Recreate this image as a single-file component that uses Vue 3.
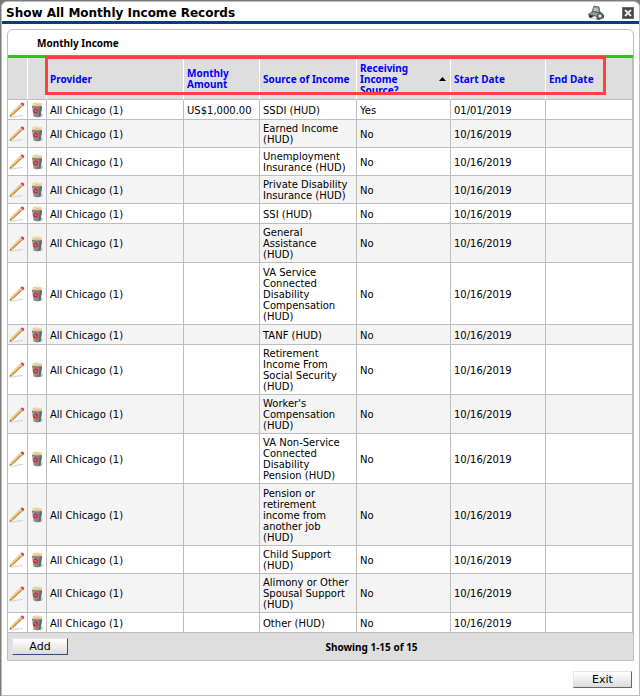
<script setup>
const columns = [
  { key: 'provider', label: 'Provider' },
  { key: 'amount', label: 'Monthly\nAmount' },
  { key: 'source', label: 'Source of Income' },
  { key: 'receiving', label: 'Receiving\nIncome\nSource?', sorted: true },
  { key: 'start', label: 'Start Date' },
  { key: 'end', label: 'End Date' },
]

const sources = [
  'SSDI (HUD)',
  'Earned Income\n(HUD)',
  'Unemployment\nInsurance (HUD)',
  'Private Disability\nInsurance (HUD)',
  'SSI (HUD)',
  'General\nAssistance\n(HUD)',
  'VA Service\nConnected\nDisability\nCompensation\n(HUD)',
  'TANF (HUD)',
  'Retirement\nIncome From\nSocial Security\n(HUD)',
  "Worker's\nCompensation\n(HUD)",
  'VA Non-Service\nConnected\nDisability\nPension (HUD)',
  'Pension or\nretirement\nincome from\nanother job\n(HUD)',
  'Child Support\n(HUD)',
  'Alimony or Other\nSpousal Support\n(HUD)',
  'Other (HUD)',
]

const rows = sources.map((source, i) => ({
  provider: 'All Chicago (1)',
  amount: i === 0 ? 'US$1,000.00' : '',
  source,
  receiving: i === 0 ? 'Yes' : 'No',
  start: i === 0 ? '01/01/2019' : '10/16/2019',
  end: '',
  tall: source.split('\n').length === 5,
}))
</script>

<template>
  <div class="backdrop">
    <main class="dialog">
      <header class="titlebar">
        <h1>Show All Monthly Income Records</h1>
        <button class="tool" aria-label="Print">
          <svg width="18" height="16" viewBox="0 0 18 16">
            <path d="M5 7 7 1l5 1 1 6z" fill="#8d999e" stroke="#646d70" />
            <path d="M7 3.500l4 1M6.500 5.500l5 1" stroke="#dfe7e9" />
            <path d="M1 9l5-3 8 1 3 3v3l-5 2-9-2z" fill="#4c5457" />
            <path d="M1 9l5-2 6 1-2 3z" fill="#8b999e" />
            <path d="M2 11l8 2" stroke="#252b2e" stroke-width="2" />
            <path d="M4 13l3-2 3 1-1 3z" fill="#e1eaed" />
            <circle cx="13" cy="11" r="2.500" fill="#9db1b8" stroke="#4a5559" />
            <circle cx="13" cy="11" r="1" fill="#eef" />
          </svg>
        </button>
        <button class="tool" aria-label="Close">
          <svg width="12" height="12" viewBox="0 0 12 12">
            <rect width="12" height="12" fill="#454545" />
            <rect x=".5" y=".5" width="11" height="11" fill="none" stroke="#6c6c6c" />
            <path d="M3 3l6 6M9 3l-6 6" stroke="#e8e8e8" stroke-width="2" />
          </svg>
        </button>
      </header>

      <section class="panel">
        <h2>Monthly Income</h2>
        <div class="grid">
          <table>
            <colgroup>
              <col class="c-edit" /><col class="c-del" /><col class="c-provider" />
              <col class="c-amount" /><col class="c-source" /><col class="c-receiving" />
              <col class="c-start" /><col />
            </colgroup>
            <thead>
              <tr>
                <th></th>
                <th></th>
                <th v-for="c in columns" :key="c.key">
                  <div class="head">
                    <a href="#">{{ c.label }}</a>
                    <svg v-if="c.sorted" width="7" height="4" viewBox="0 0 7 4">
                      <path d="M3.500 0 7 4H0z" fill="#000" />
                    </svg>
                  </div>
                </th>
              </tr>
            </thead>
            <tbody>
              <tr v-for="row in rows" :key="row.source" :class="{ tall: row.tall }">
                <td class="icon">
                  <button aria-label="Edit">
                    <svg width="18" height="16" viewBox="0 0 18 16">
                      <path d="M3 15.500l7-1.500 5-.500" stroke="#d2d2d2" fill="none" />
                      <path d="M1.500 15l1.300-4L12 2l2.500 2.300L5 13.300z" fill="#e9bf7d" />
                      <path d="M4.500 12.800L13.800 4" stroke="#a97734" />
                      <path d="M3.300 11L12 2.500" stroke="#f8dfae" />
                      <path d="M1.500 15l.900-2.600 1.500 1.500z" fill="#8d6842" />
                      <path d="M11.500 2.500l1-1 2.700 2.600-1 1z" fill="#d3d9df" />
                      <path d="M12.500 1.500Q14-.2 15.500 1t.3 2.500l-.9 1z" fill="#d94a47" />
                    </svg>
                  </button>
                </td>
                <td class="icon">
                  <button aria-label="Delete">
                    <svg width="14" height="16" viewBox="0 0 14 16">
                      <path d="M5 15h7l1-3-2-1z" fill="#c9c9c9" />
                      <path d="M2 4h10l-1.500 10.500-3 1-4-1z" fill="#85898c" />
                      <path d="M9.500 5H12l-1.500 9.500-2 .500z" fill="#65696c" />
                      <path d="M3.300 5l1 9" stroke="#acafb1" />
                      <path d="M2 4.500l1-3.500L8 .5l4 1.200-.500 3z" fill="#e5c48b" />
                      <path d="M3 2.500l5-1 3 1" stroke="#f8e2b8" fill="none" />
                      <path d="M2 4.500q5 1.500 10 0" stroke="#73777b" fill="none" />
                      <circle cx="5.500" cy="9" r="2.500" fill="#d32932" />
                      <path d="M4.500 8l2 2" stroke="#f4a7a7" />
                    </svg>
                  </button>
                </td>
                <td v-for="c in columns" :key="c.key">{{ row[c.key] }}</td>
              </tr>
            </tbody>
          </table>
          <div class="highlight"></div>
        </div>
        <footer class="pager">
          <button class="btn add">Add</button>
          <strong>Showing 1-15 of 15</strong>
        </footer>
      </section>

      <div class="actions">
        <button class="btn exit">Exit</button>
      </div>
    </main>
  </div>
</template>

<style>
body {
  margin: 0;
  background: #7a7a7a;
}
</style>

<style scoped>
* {
  box-sizing: border-box;
}
.backdrop {
  padding: 1px 0 0 1px;
  background: #7a7a7a;
  font: 10px/11px Verdana, "DejaVu Sans", sans-serif;
  color: #000;
}
.dialog {
  background: #fff;
  border: 1px solid #bdbdbd;
  border-radius: 6px 6px 0 0;
}
.titlebar {
  display: flex;
  align-items: center;
  gap: 17px;
  height: 22px;
  padding: 2px 5px 0 4px;
  border-bottom: 3px solid #073e7d;
}
h1 {
  flex: 1;
  margin: 0;
  font: bold 12px/16px Verdana, "DejaVu Sans", sans-serif;
}
.tool,
.icon button {
  display: block;
  padding: 0;
  border: 0;
  background: none;
}
.tool svg,
.icon svg {
  display: block;
}
.panel {
  margin: 5px 5px 0;
  border: 1px solid #bdbdbd;
  border-radius: 6px 6px 0 0;
}
h2 {
  margin: 0;
  padding: 7px 29px 6px;
  font: bold 10px/12px "Noto Sans", sans-serif;
  border-bottom: 3px solid #37bf25;
}
.grid {
  position: relative;
}
table {
  width: 100%;
  table-layout: fixed;
  border-collapse: separate;
  border-spacing: 0;
  border-right: 1px solid #bdbdbd;
}
.c-edit { width: 20px; }
.c-del { width: 19px; }
.c-provider { width: 137px; }
.c-amount { width: 76px; }
.c-source { width: 97px; }
.c-receiving { width: 94px; }
.c-start { width: 95px; }
th,
td {
  padding: 3px 0 2px 3px;
  text-align: left;
  vertical-align: middle;
  white-space: pre;
  border-right: 1px solid #bdbdbd;
  border-bottom: 1px solid #bdbdbd;
}
th {
  height: 42px;
  background: #dedede;
  border-right-color: #fff;
}
th:last-child,
td:last-child {
  border-right: 0;
}
.head {
  display: flex;
  align-items: center;
  justify-content: space-between;
  max-height: 32px;
  padding-right: 4px;
}
th a {
  color: #00f;
  font: bold 10px/11px "Noto Sans", sans-serif;
  text-decoration: none;
}
tbody tr:nth-child(even) {
  background: #f4f4f4;
}
.tall td {
  height: 62px;
}
td.icon {
  padding: 2px 0 1px;
}
td.icon + td.icon {
  padding-left: 2px;
}
.highlight {
  position: absolute;
  top: -2px;
  left: 37px;
  width: 561px;
  height: 39px;
  border: 3px solid #ff4141;
  pointer-events: none;
}
.pager {
  display: grid;
  grid-template-columns: 98px 1fr;
  align-items: center;
  height: 27px;
  padding: 0 0 0 4px;
  background: #dedede;
}
.pager strong {
  text-align: center;
  font: bold 10px/12px "Noto Sans", sans-serif;
}
.btn {
  height: 17px;
  padding: 0;
  font: 11px/13px Verdana, "DejaVu Sans", sans-serif;
  color: #000;
  background: linear-gradient(#fff, #dcdcdc);
  border: 1px solid;
  border-color: #e6e6e6 #666 #666 #e6e6e6;
}
.add {
  width: 56px;
  border-color: #dfe8f3 #2f4f84 #2f4f84 #dfe8f3;
}
.exit {
  width: 59px;
}
.actions {
  display: flex;
  justify-content: flex-end;
  padding: 10px 7px 7px;
}
</style>
